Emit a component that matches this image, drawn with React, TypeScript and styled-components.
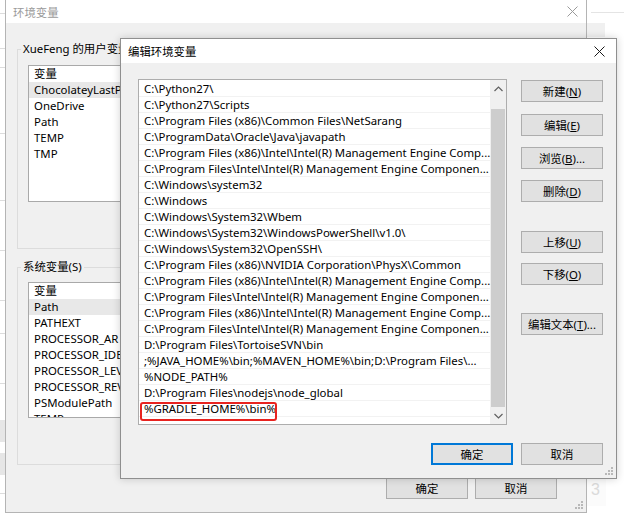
import React from "react";
import styled, { createGlobalStyle } from "styled-components";

const uiFont = `"Noto Sans", "Noto Sans CJK SC", sans-serif`;
const uiSize = "11.4px";

const GlobalStyle = createGlobalStyle`
  body {
    margin: 0;
    background: #ffffff;
    font-family: ${uiFont};
    overflow: hidden;
  }
`;

const pathRows = [
  "C:\\Python27\\",
  "C:\\Python27\\Scripts",
  "C:\\Program Files (x86)\\Common Files\\NetSarang",
  "C:\\ProgramData\\Oracle\\Java\\javapath",
  "C:\\Program Files (x86)\\Intel\\Intel(R) Management Engine Comp...",
  "C:\\Program Files\\Intel\\Intel(R) Management Engine Componen...",
  "C:\\Windows\\system32",
  "C:\\Windows",
  "C:\\Windows\\System32\\Wbem",
  "C:\\Windows\\System32\\WindowsPowerShell\\v1.0\\",
  "C:\\Windows\\System32\\OpenSSH\\",
  "C:\\Program Files (x86)\\NVIDIA Corporation\\PhysX\\Common",
  "C:\\Program Files (x86)\\Intel\\Intel(R) Management Engine Comp...",
  "C:\\Program Files\\Intel\\Intel(R) Management Engine Componen...",
  "C:\\Program Files (x86)\\Intel\\Intel(R) Management Engine Comp...",
  "C:\\Program Files\\Intel\\Intel(R) Management Engine Componen...",
  "D:\\Program Files\\TortoiseSVN\\bin",
  ";%JAVA_HOME%\\bin;%MAVEN_HOME%\\bin;D:\\Program Files\\...",
  "%NODE_PATH%",
  "D:\\Program Files\\nodejs\\node_global",
  "%GRADLE_HOME%\\bin%",
];

const userVars = ["ChocolateyLastP", "OneDrive", "Path", "TEMP", "TMP"];
const systemVars = [
  "Path",
  "PATHEXT",
  "PROCESSOR_AR",
  "PROCESSOR_IDE",
  "PROCESSOR_LEV",
  "PROCESSOR_REV",
  "PSModulePath",
  "TEMP",
];

// lines of the window peeking out on the left
const leftLines = [13, 48, 67, 133, 200, 250, 300, 333, 383, 493];

const CloseIcon = ({ color }: { color: string }) => (
  <svg width="11" height="11" viewBox="0 0 11 11">
    <path d="M0.5 0.5 L10.5 10.5 M10.5 0.5 L0.5 10.5" stroke={color} strokeWidth="1" />
  </svg>
);

const Grip = () => (
  <svg width="8" height="8" viewBox="0 0 8 8">
    {[
      [6, 0],
      [6, 3],
      [3, 3],
      [6, 6],
      [3, 6],
      [0, 6],
    ].map(([x, y]) => (
      <rect key={`${x}-${y}`} x={x} y={y} width="2" height="2" fill="#b8b8b8" />
    ))}
  </svg>
);

const Chevron = ({ up }: { up?: boolean }) => (
  <svg width="9" height="6" viewBox="0 0 9 6">
    <path
      d={up ? "M0.5 5 L4.5 1 L8.5 5" : "M0.5 1 L4.5 5 L8.5 1"}
      stroke="#606060"
      strokeWidth="1.2"
      fill="none"
    />
  </svg>
);

const App = () => {
  return (
    <Desktop>
      <GlobalStyle />

      <BehindLeft>
        {leftLines.map((y) => (
          <BehindLine key={y} style={{ top: y }} />
        ))}
        <BehindBlock $top={420} />
        <BehindBlock $top={453} />
      </BehindLeft>

      <BehindRight>
        <BehindRightBar />
        <BehindRightStrip />
      </BehindRight>

      <BehindCorner>3</BehindCorner>

      <EnvWindow>
        <TitleBar $height={23}>
          <Title $inactive>环境变量</Title>
          <CloseSlot $right={8}>
            <CloseIcon color="#9a9a9a" />
          </CloseSlot>
        </TitleBar>
        <EnvClient>
          <Group $gapTop={19}>
            <Legend>XueFeng 的用户变量(U)</Legend>
            <VarList $top={9} $height={137}>
              <VarRow>变量</VarRow>
              {userVars.map((v, i) => (
                <VarRow key={v} $selected={i === 0}>
                  {v}
                </VarRow>
              ))}
            </VarList>
          </Group>

          <Group $gapTop={11}>
            <Legend>系统变量(S)</Legend>
            <VarList $top={8} $height={136}>
              <VarRow>变量</VarRow>
              {systemVars.map((v, i) => (
                <VarRow key={v} $selected={i === 0}>
                  {v}
                </VarRow>
              ))}
            </VarList>
          </Group>

          <EnvFooter>
            <DialogButton>确定</DialogButton>
            <DialogButton>取消</DialogButton>
          </EnvFooter>
        </EnvClient>
        <GripSlot>
          <Grip />
        </GripSlot>
      </EnvWindow>

      <EditWindow>
        <TitleBar $height={24}>
          <Title>编辑环境变量</Title>
          <CloseSlot $right={11}>
            <CloseIcon color="#1a1a1a" />
          </CloseSlot>
        </TitleBar>
        <EditClient>
          <EditBody>
            <PathList>
              <PathRows>
                {pathRows.map((p, i) => (
                  <PathRow key={i}>
                    {p}
                    {i === pathRows.length - 1 && <RedMark />}
                  </PathRow>
                ))}
              </PathRows>
              <ScrollBar>
                <ScrollArrow>
                  <Chevron up />
                </ScrollArrow>
                <ScrollThumb />
                <ScrollArrow>
                  <Chevron />
                </ScrollArrow>
              </ScrollBar>
            </PathList>

            <ButtonColumn>
              <SideButton $gap={1}>
                新建(<u>N</u>)
              </SideButton>
              <SideButton $gap={12}>
                编辑(<u>E</u>)
              </SideButton>
              <SideButton $gap={11}>
                浏览(<u>B</u>)...
              </SideButton>
              <SideButton $gap={11}>
                删除(<u>D</u>)
              </SideButton>
              <SideButton $gap={29}>
                上移(<u>U</u>)
              </SideButton>
              <SideButton $gap={10}>
                下移(<u>O</u>)
              </SideButton>
              <SideButton $gap={28}>
                编辑文本(<u>T</u>)...
              </SideButton>
            </ButtonColumn>
          </EditBody>

          <EditFooter>
            <DialogButton $primary>确定</DialogButton>
            <DialogButton>取消</DialogButton>
          </EditFooter>
        </EditClient>
        <GripSlot>
          <Grip />
        </GripSlot>
      </EditWindow>
    </Desktop>
  );
};

export default App;

const Desktop = styled.div`
  position: relative;
  width: 624px;
  height: 514px;
  overflow: hidden;
  background: #ffffff;
  font-size: ${uiSize};
  color: #000;
`;

const BehindLeft = styled.div`
  position: absolute;
  left: 0;
  top: 0;
  width: 6px;
  height: 514px;
  background: #fff;
`;

const BehindLine = styled.div`
  position: absolute;
  left: 0;
  width: 6px;
  height: 1px;
  background: #dcdcdc;
`;

const BehindBlock = styled.div<{ $top: number }>`
  position: absolute;
  left: 0;
  top: ${(p) => p.$top}px;
  width: 6px;
  height: 22px;
  background: #e6e6e6;
`;

const BehindRight = styled.div`
  position: absolute;
  left: 586px;
  top: 0;
  width: 38px;
  height: 40px;
  background: #fff;
`;

const BehindRightBar = styled.div`
  margin-top: 12px;
  margin-left: 5px;
  height: 1px;
  background: #e4e4e4;
`;

const BehindRightStrip = styled.div`
  margin-top: 10px;
  width: 19px;
  height: 14px;
  background: #f0f0f0;
`;

const BehindCorner = styled.div`
  position: absolute;
  left: 586px;
  top: 478px;
  width: 20px;
  height: 28px;
  background: #fbfbfb;
  color: #dadada;
  font-family: "Liberation Sans", sans-serif;
  font-size: 16px;
  line-height: 24px;
  padding-left: 5px;
  box-sizing: border-box;
`;

const EnvWindow = styled.div`
  position: absolute;
  left: 5px;
  top: 0;
  width: 582px;
  height: 513px;
  box-sizing: border-box;
  border: 1px solid #b4b4b4;
  border-top: none;
  background: #f0f0f0;
  display: flex;
  flex-direction: column;
`;

const TitleBar = styled.div<{ $height: number }>`
  position: relative;
  height: ${(p) => p.$height}px;
  flex: none;
  background: #ffffff;
  display: flex;
  align-items: center;
`;

const Title = styled.span<{ $inactive?: boolean }>`
  padding-left: 7px;
  color: ${(p) => (p.$inactive ? "#9a9a9a" : "#000")};
`;

const CloseSlot = styled.span<{ $right: number }>`
  margin-left: auto;
  margin-right: ${(p) => p.$right}px;
  display: flex;
`;

const EnvClient = styled.div`
  flex: 1;
  display: flex;
  flex-direction: column;
  padding: 0 10px 0 11px;
`;

const Group = styled.fieldset<{ $gapTop: number }>`
  margin: ${(p) => p.$gapTop}px 0 0;
  padding: 0 10px 46px;
  border: 1px solid #dcdcdc;
  min-width: 0;
`;

const Legend = styled.legend`
  margin-left: -7px;
  padding: 0 2px;
  line-height: 14px;
  color: #000;
`;

const VarList = styled.div<{ $top: number; $height: number }>`
  margin-top: ${(p) => p.$top}px;
  height: ${(p) => p.$height}px;
  box-sizing: border-box;
  border: 1px solid #a9a9a9;
  background: #ffffff;
  overflow: hidden;
`;

const VarRow = styled.div<{ $selected?: boolean }>`
  height: 16px;
  line-height: 16px;
  padding-left: 5px;
  background: ${(p) => (p.$selected ? "#e8e8e8" : "transparent")};
  white-space: nowrap;
`;

const EnvFooter = styled.div`
  margin-top: 12px;
  display: flex;
  justify-content: flex-end;
  gap: 7px;
  padding-right: 19px;
`;

const DialogButton = styled.button<{ $primary?: boolean }>`
  width: 82px;
  height: 22px;
  padding: 0;
  font-family: ${uiFont};
  font-size: ${uiSize};
  color: #000;
  background: #e1e1e1;
  border: 1px solid ${(p) => (p.$primary ? "#0078d7" : "#adadad")};
  box-shadow: ${(p) => (p.$primary ? "inset 0 0 0 1px #0078d7" : "none")};
`;

const GripSlot = styled.div`
  position: absolute;
  right: 3px;
  bottom: 3px;
  display: flex;
`;

const EditWindow = styled.div`
  position: absolute;
  left: 120px;
  top: 38px;
  width: 497px;
  height: 441px;
  box-sizing: border-box;
  border: 1px solid #8f8f8f;
  background: #f0f0f0;
  display: flex;
  flex-direction: column;
  box-shadow: 0 0 8px rgba(0, 0, 0, 0.18);
`;

const EditClient = styled.div`
  flex: 1;
  display: flex;
  flex-direction: column;
  padding: 16px 13px 0 17px;
`;

const EditBody = styled.div`
  display: flex;
  gap: 14px;
`;

const PathList = styled.div`
  width: 369px;
  height: 346px;
  box-sizing: border-box;
  border: 1px solid #adadad;
  background: #ffffff;
  display: flex;
  overflow: hidden;
`;

const PathRows = styled.div`
  flex: 1;
  min-width: 0;
  padding-top: 1px;
`;

const PathRow = styled.div`
  position: relative;
  height: 16px;
  line-height: 15px;
  padding-left: 5px;
  border-bottom: 1px solid #f2f2f2;
  box-sizing: border-box;
  white-space: nowrap;
`;

const RedMark = styled.span`
  position: absolute;
  left: 1px;
  top: 1px;
  width: 137px;
  height: 19px;
  box-sizing: border-box;
  border: 2px solid #e8231f;
  border-radius: 3px;
`;

const ScrollBar = styled.div`
  width: 16px;
  flex: none;
  background: #f0f0f0;
  display: flex;
  flex-direction: column;
`;

const ScrollArrow = styled.div`
  height: 17px;
  display: flex;
  align-items: center;
  justify-content: center;
  flex: none;
`;

const ScrollThumb = styled.div`
  flex: 1;
  margin: 12px 1px 0;
  background: #cdcdcd;
`;

const ButtonColumn = styled.div`
  display: flex;
  flex-direction: column;
`;

const SideButton = styled(DialogButton)<{ $gap: number }>`
  margin-top: ${(p) => p.$gap}px;
  u {
    text-decoration: underline;
  }
`;

const EditFooter = styled.div`
  margin-top: 18px;
  display: flex;
  justify-content: flex-end;
  gap: 8px;
`;
